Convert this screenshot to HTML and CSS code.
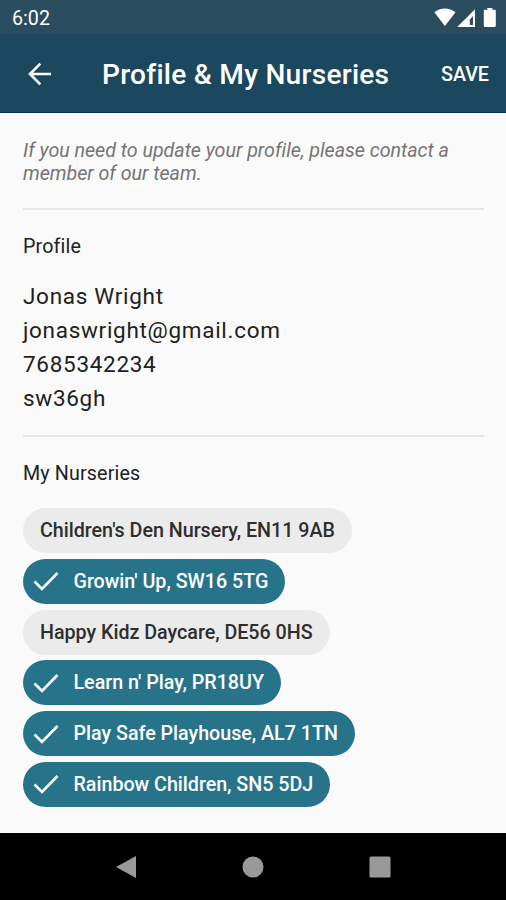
FILE: index.html
```html
<!DOCTYPE html>
<html lang="en">
  <head>
    <meta charset="UTF-8" />
    <meta name="viewport" content="width=device-width, initial-scale=1.0" />
    <title>Profile &amp; My Nurseries</title>
    <link rel="stylesheet" href="styles.css">
  </head>
  <body>
    <div class="screen">
      <div class="status-bar">
        <span class="time">6:02</span>
        <svg class="status-icons" width="64" height="22" viewBox="0 0 64 22" fill="#fff">
          <path d="M0.300 4.300C6 -0.900 15.800 -0.900 21.500 4.300L10.900 18Z" />
          <path d="M41 1.200V19H23.200ZM39 8.200L35.800 11.400V17H39Z" fill-rule="evenodd" />
          <path d="M53.300 0h5v1.700h2.300q1.200 0 1.200 1.200v14.900q0 1.200-1.200 1.200h-9.600q-1.200 0-1.200-1.200V2.900q0-1.200 1.200-1.200H53.300Z" />
        </svg>
      </div>

      <div class="app-bar">
        <button class="back" aria-label="Back">
          <svg width="24" height="24" viewBox="0 0 24 24" fill="none" stroke="#fff" stroke-width="2.600">
            <path d="M23 12H2.500M12.300 1.700L2 12L12.300 22.300" />
          </svg>
        </button>
        <h1>Profile &amp; My Nurseries</h1>
        <button class="save">SAVE</button>
      </div>

      <main class="content">
        <p class="notice">If you need to update your profile, please contact a member of our team.</p>

        <section class="section profile">
          <h2>Profile</h2>
          <ul class="details">
            <li>Jonas Wright</li>
            <li>jonaswright@gmail.com</li>
            <li>7685342234</li>
            <li>sw36gh</li>
          </ul>
        </section>

        <section class="section nurseries">
          <h2>My Nurseries</h2>
          <div class="chips">
            <div class="chip">Children's Den Nursery, EN11 9AB</div>
            <div class="chip selected">
              <svg class="check" width="26" height="20" viewBox="0 0 26 20"><path d="M1.500 10.500L9 18L24.500 2" /></svg>
              Growin' Up, SW16 5TG
            </div>
            <div class="chip">Happy Kidz Daycare, DE56 0HS</div>
            <div class="chip selected">
              <svg class="check" width="26" height="20" viewBox="0 0 26 20"><path d="M1.500 10.500L9 18L24.500 2" /></svg>
              Learn n' Play, PR18UY
            </div>
            <div class="chip selected">
              <svg class="check" width="26" height="20" viewBox="0 0 26 20"><path d="M1.500 10.500L9 18L24.500 2" /></svg>
              Play Safe Playhouse, AL7 1TN
            </div>
            <div class="chip selected">
              <svg class="check" width="26" height="20" viewBox="0 0 26 20"><path d="M1.500 10.500L9 18L24.500 2" /></svg>
              Rainbow Children, SN5 5DJ
            </div>
          </div>
        </section>
      </main>

      <div class="nav-bar">
        <svg width="22" height="24" viewBox="0 0 22 24"><path d="M21 1V23L1 12Z" /></svg>
        <svg width="22" height="22" viewBox="0 0 22 22"><circle cx="11" cy="11" r="10.500" /></svg>
        <svg width="22" height="22" viewBox="0 0 22 22"><rect x="0.500" y="0.500" width="21" height="21" rx="1.500" /></svg>
      </div>
    </div>
  </body>
</html>
```

FILE: styles.css
```css
* {
  margin: 0;
  padding: 0;
  box-sizing: border-box;
}

body {
  font-family: Roboto, sans-serif;
  background: #fafafa;
  color: #212121;
}

button {
  background: none;
  border: none;
  color: inherit;
  font-family: inherit;
}

svg {
  display: block;
  flex-shrink: 0;
}

.screen {
  display: flex;
  flex-direction: column;
  height: 900px;
  overflow: hidden;
}

.status-bar {
  display: flex;
  justify-content: space-between;
  height: 34px;
  padding: 8px 8px 0 12px;
  background: #2b4b5e;
  color: #fff;
}

.time {
  font-size: 19.7px;
  line-height: 21px;
}

.app-bar {
  display: flex;
  align-items: center;
  height: 79px;
  padding: 2px 17px 0 28px;
  background: #1b485e;
  border-bottom: 1px solid #0c2f49;
  color: #fff;
}

.app-bar h1 {
  flex: 1;
  margin-left: 50px;
  font-size: 28.1px;
  font-weight: 500;
  line-height: 34px;
  letter-spacing: 0.26px;
  padding-top: 2px;
  white-space: nowrap;
}

.save {
  padding-top: 1px;
  font-size: 19.7px;
  font-weight: 500;
}

.content {
  flex: 1;
  padding: 26px 22px 0 23px;
}

.notice {
  height: 69px;
  font-size: 19.7px;
  font-style: italic;
  line-height: 23px;
  letter-spacing: -0.04px;
  color: #757575;
}

.section {
  border-top: 2px solid #e6e6e6;
  padding-top: 25px;
}

.section h2 {
  font-size: 19.7px;
  font-weight: 400;
  line-height: 24px;
  letter-spacing: 0.14px;
}

.profile {
  height: 226.5px;
}

.details {
  margin-top: 21.4px;
  list-style: none;
  font-size: 22.5px;
  line-height: 33.75px;
  letter-spacing: 0.7px;
}

.chips {
  display: flex;
  flex-direction: column;
  align-items: flex-start;
  gap: 5.7px;
  margin-top: 22.8px;
}

.chip {
  display: flex;
  align-items: center;
  height: 45px;
  padding: 0 17px;
  border-radius: 23px;
  background: #ebebeb;
  color: #2e2e2e;
  font-size: 19.7px;
  font-weight: 500;
  letter-spacing: -0.02px;
  white-space: nowrap;
}

.chip.selected {
  gap: 14.5px;
  padding-left: 10px;
  background: #26738a;
  color: #fff;
}

.check {
  fill: none;
  stroke: #fff;
  stroke-width: 2.6;
}

.nav-bar {
  display: flex;
  align-items: center;
  justify-content: space-between;
  height: 67px;
  padding: 0 115px;
  background: #000;
}

.nav-bar svg {
  fill: #999;
}
```
